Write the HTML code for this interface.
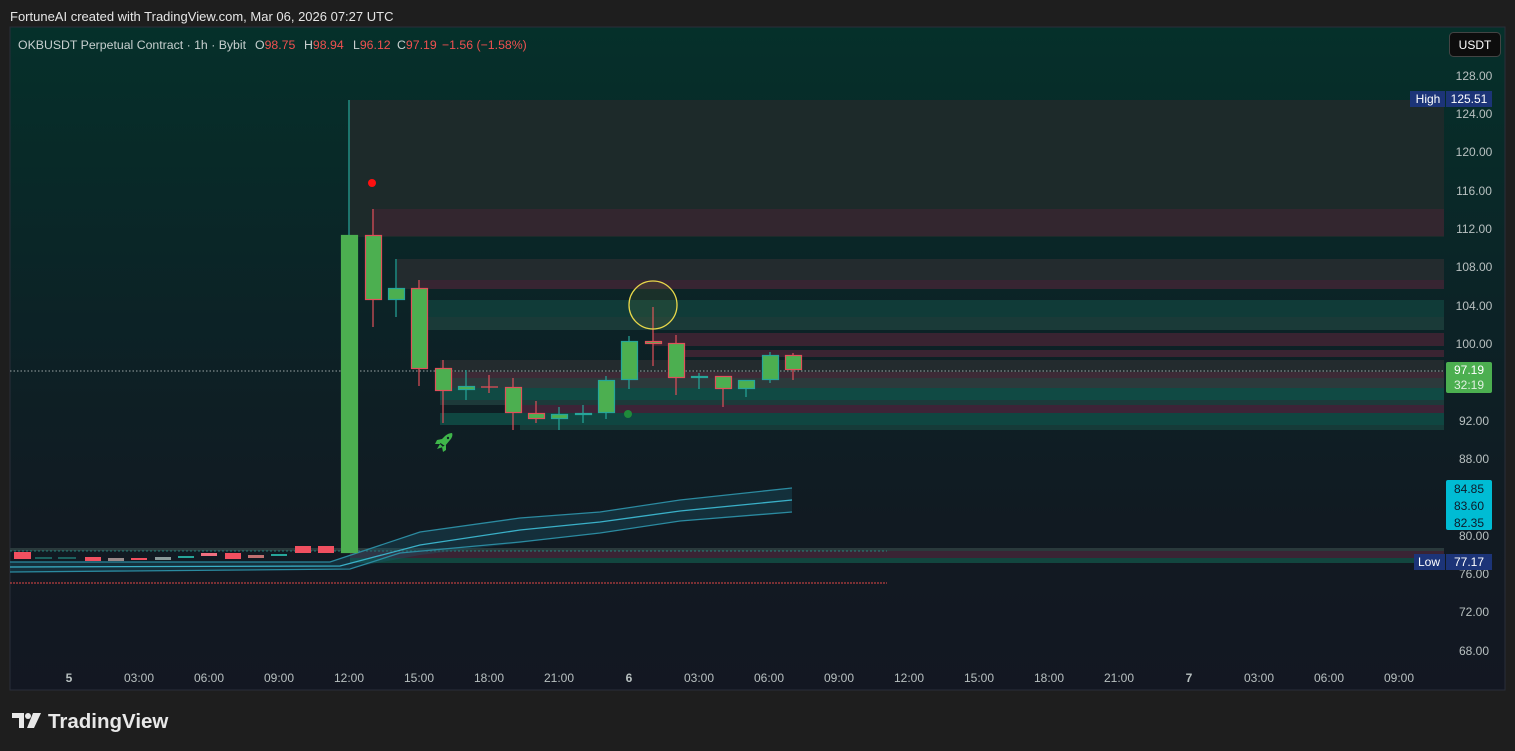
<!DOCTYPE html>
<html><head><meta charset="utf-8"><style>
html,body{margin:0;padding:0;background:#1e1e1e;width:1515px;height:751px;overflow:hidden;font-family:"Liberation Sans",sans-serif}
.top{position:absolute;left:10px;top:9px;color:#e6e6e6;font-size:13px}
svg{position:absolute;left:0;top:0}
</style></head><body>
<div class="top">FortuneAI created with TradingView.com, Mar 06, 2026 07:27 UTC</div>
<svg width="1515" height="751" xmlns="http://www.w3.org/2000/svg" font-family="Liberation Sans, sans-serif">
<defs>
<linearGradient id="bg" x1="0" y1="0" x2="0" y2="1">
<stop offset="0" stop-color="#05302a"/><stop offset="0.45" stop-color="#0c2226"/><stop offset="0.75" stop-color="#111a22"/><stop offset="1" stop-color="#131722"/>
</linearGradient>
</defs>
<rect x="10" y="27" width="1495" height="663" fill="url(#bg)" stroke="#2a2e39"/>
<rect x="349" y="100" width="1095" height="137" fill="#1d2a2a"/>
<rect x="372" y="209" width="1072" height="27" fill="#3a2531" opacity="0.8"/>
<rect x="397" y="259" width="1047" height="30" fill="#232b2e"/>
<rect x="420" y="280" width="1024" height="9" fill="#3b2432" opacity="0.85"/>
<rect x="420" y="300" width="1024" height="30" fill="#134640" opacity="0.7"/>
<rect x="420" y="317" width="1024" height="13" fill="#1a3a38"/>
<rect x="653" y="333" width="791" height="13" fill="#3e2333" opacity="0.9"/>
<rect x="683" y="350" width="761" height="7" fill="#3a2432"/>
<rect x="440" y="360" width="1004" height="13" fill="#232b2e"/>
<rect x="440" y="372" width="1004" height="6" fill="#3d2a36"/>
<rect x="440" y="378" width="1004" height="10" fill="#2c3a3c"/>
<rect x="440" y="388" width="1004" height="12" fill="#10524a" opacity="0.85"/>
<rect x="440" y="400" width="1004" height="5" fill="#1d3a3a"/>
<rect x="510" y="405" width="934" height="8" fill="#43253a" opacity="0.9"/>
<rect x="440" y="413" width="1004" height="12" fill="#0f4d46" opacity="0.85"/>
<rect x="520" y="425" width="924" height="5" fill="#163a38"/>
<rect x="10" y="548" width="1434" height="3" fill="#2a3a3c"/>
<rect x="350" y="551" width="1094" height="7" fill="#3a2434"/>
<rect x="350" y="558" width="1094" height="5" fill="#12463f"/>
<line x1="10" y1="551" x2="887" y2="551" stroke="#26a69a" stroke-dasharray="2 2" stroke-width="1" opacity="0.7"/>
<line x1="10" y1="583" x2="887" y2="583" stroke="#e04646" stroke-dasharray="2 1" stroke-width="1"/>
<path d="M10 562 L330 562 L420 532 L520 518 L600 512 L680 500 L792 488 L792 512 L680 521 L600 533 L520 543 L420 555 L350 568 L10 572 Z" fill="#1b5a6a" opacity="0.35"/>
<path d="M10 562 L330 562 L420 532 L520 518 L600 512 L680 500 L792 488" fill="none" stroke="#2b8aa0" stroke-width="1.3"/>
<path d="M10 567 L340 566 L420 545 L520 530 L600 522 L680 511 L792 500" fill="none" stroke="#3ab0c8" stroke-width="1.3"/>
<path d="M10 572 L350 569 L400 553 L520 542 L600 533 L680 521 L792 512" fill="none" stroke="#2b8aa0" stroke-width="1.3"/>
<line x1="10" y1="371" x2="1444" y2="371" stroke="#9aa5a5" stroke-dasharray="1.5 2" stroke-width="1"/>
<g stroke-width="1">
<rect x="14" y="552" width="17" height="7" fill="#f05060"/>
<line x1="35" y1="558" x2="52" y2="558" stroke="#26a69a"/>
<line x1="58" y1="558" x2="76" y2="558" stroke="#26a69a"/>
<rect x="85" y="557" width="16" height="4" fill="#f05060"/>
<rect x="108" y="558" width="16" height="3" fill="#9a8a8a"/>
<rect x="131" y="558" width="16" height="2" fill="#f05060"/>
<rect x="155" y="557" width="16" height="3" fill="#8a9a9a"/>
<rect x="178" y="556" width="16" height="2" fill="#26a69a"/>
<rect x="201" y="553" width="16" height="3" fill="#f07080"/>
<rect x="225" y="553" width="16" height="6" fill="#f05060"/>
<rect x="248" y="555" width="16" height="3" fill="#c07070"/>
<rect x="271" y="554" width="16" height="2" fill="#26a69a"/>
<rect x="295" y="546" width="16" height="7" fill="#f05060"/>
<rect x="318" y="546" width="16" height="7" fill="#f05060"/>
</g>
<g fill="#4caf50" stroke-width="1.2">
<line x1="349" y1="100" x2="349" y2="235" stroke="#26a69a"/>
<rect x="341.5" y="235.5" width="16" height="317" stroke="#4caf50"/>
<g stroke="#e0505a">
<line x1="373" y1="209" x2="373" y2="327"/><rect x="365.5" y="235.5" width="16" height="64"/>
<line x1="419" y1="280" x2="419" y2="386"/><rect x="411.5" y="288.5" width="16" height="80"/>
<line x1="443" y1="360" x2="443" y2="423"/><rect x="435.5" y="368.5" width="16" height="22"/>
<line x1="489" y1="375" x2="489" y2="393"/><line x1="481" y1="387" x2="498" y2="387"/>
<line x1="513" y1="378" x2="513" y2="430"/><rect x="505.5" y="387.5" width="16" height="25"/>
<line x1="536" y1="401" x2="536" y2="423"/><rect x="528.5" y="413.5" width="16" height="5"/>
<line x1="653" y1="307" x2="653" y2="366"/><rect x="645.5" y="341.5" width="16" height="2"/>
<line x1="676" y1="335" x2="676" y2="395"/><rect x="668.5" y="343.5" width="16" height="34"/>
<line x1="723" y1="376" x2="723" y2="407"/><rect x="715.5" y="376.5" width="16" height="12"/>
<line x1="793" y1="353" x2="793" y2="380"/><rect x="785.5" y="355.5" width="16" height="14"/>
</g>
<g stroke="#26a69a">
<line x1="396" y1="259" x2="396" y2="317"/><rect x="388.5" y="288.5" width="16" height="11"/>
<line x1="466" y1="370" x2="466" y2="400"/><rect x="458.5" y="386.5" width="16" height="3"/>
<line x1="559" y1="407" x2="559" y2="430"/><rect x="551.5" y="414.5" width="16" height="4"/>
<line x1="583" y1="405" x2="583" y2="423"/><rect x="575.5" y="413.5" width="16" height="1"/>
<line x1="606" y1="376" x2="606" y2="419"/><rect x="598.5" y="380.5" width="16" height="32"/>
<line x1="629" y1="336" x2="629" y2="389"/><rect x="621.5" y="341.5" width="16" height="38"/>
<line x1="699" y1="373" x2="699" y2="389"/><rect x="691.5" y="376.5" width="16" height="1"/>
<line x1="746" y1="380" x2="746" y2="397"/><rect x="738.5" y="380.5" width="16" height="8"/>
<line x1="770" y1="352" x2="770" y2="383"/><rect x="762.5" y="355.5" width="16" height="24"/>
</g>
</g>
<circle cx="653" cy="305" r="24" fill="rgba(200,200,80,0.08)" stroke="#e8d84a" stroke-width="1.3"/>
<circle cx="372" cy="183" r="4" fill="#ff1010"/>
<circle cx="628" cy="414" r="4" fill="#1f8a3a"/>
<g fill="#3fb54a">
<path d="M452 433 C453 435 452 438 450 440 L445 446 L439 442 L445 436 C447 434 450 433 452 433 Z"/>
<path d="M442 439 L437 440 L435 444 L440 444 Z"/>
<path d="M446 445 L446 450 L443 452 L442 447 Z"/>
<path d="M440 444 L437 449 L443 447 Z"/>
</g>
<circle cx="448" cy="438" r="1.2" fill="#0c2226"/>
<g font-size="12.3" fill="#c8d0d0">
<text x="18" y="49">OKBUSDT Perpetual Contract · 1h · Bybit</text>
<text x="255" y="49">O<tspan fill="#f05050">98.75</tspan></text>
<text x="304" y="49">H<tspan fill="#f05050">98.94</tspan></text>
<text x="353" y="49">L<tspan fill="#f05050">96.12</tspan></text>
<text x="397" y="49">C<tspan fill="#f05050">97.19</tspan></text>
<text x="442" y="49" fill="#f05050">−1.56 (−1.58%)</text>
</g>
<rect x="1449.5" y="32.5" width="51" height="24" rx="4" fill="#0d0d0d" stroke="#444"/>
<text x="1475" y="49" font-size="12" fill="#fff" text-anchor="middle">USDT</text>
<g font-size="12" fill="#b8c0c0" text-anchor="middle">
<text x="1474" y="80">128.00</text><text x="1474" y="118">124.00</text><text x="1474" y="156">120.00</text><text x="1474" y="195">116.00</text><text x="1474" y="233">112.00</text><text x="1474" y="271">108.00</text><text x="1474" y="310">104.00</text><text x="1474" y="348">100.00</text><text x="1474" y="425">92.00</text><text x="1474" y="463">88.00</text><text x="1474" y="540">80.00</text><text x="1474" y="578">76.00</text><text x="1474" y="616">72.00</text><text x="1474" y="655">68.00</text>
</g>
<rect x="1410" y="91" width="35" height="16" fill="#1c3478"/><text x="1428" y="103" font-size="12" fill="#fff" text-anchor="middle">High</text>
<rect x="1446" y="91" width="46" height="16" fill="#1c3478"/><text x="1469" y="103" font-size="12" fill="#fff" text-anchor="middle">125.51</text>
<rect x="1446" y="362" width="46" height="31" rx="2" fill="#4caf50"/><text x="1469" y="374" font-size="12" fill="#fff" text-anchor="middle">97.19</text><text x="1469" y="389" font-size="12" fill="#e0f0e0" text-anchor="middle">32:19</text>
<rect x="1446" y="480" width="46" height="50" rx="2" fill="#00bcd4"/>
<g font-size="12" fill="#0d1a2a" text-anchor="middle"><text x="1469" y="493">84.85</text><text x="1469" y="510">83.60</text><text x="1469" y="527">82.35</text></g>
<rect x="1414" y="554" width="31" height="16" fill="#1c3478"/><text x="1429" y="566" font-size="12" fill="#fff" text-anchor="middle">Low</text>
<rect x="1446" y="554" width="46" height="16" fill="#1c3478"/><text x="1469" y="566" font-size="12" fill="#fff" text-anchor="middle">77.17</text>
<g font-size="12" fill="#b8c0c0" text-anchor="middle">
<text x="69" y="682" font-weight="bold">5</text><text x="139" y="682">03:00</text><text x="209" y="682">06:00</text><text x="279" y="682">09:00</text><text x="349" y="682">12:00</text><text x="419" y="682">15:00</text><text x="489" y="682">18:00</text><text x="559" y="682">21:00</text><text x="629" y="682" font-weight="bold">6</text><text x="699" y="682">03:00</text><text x="769" y="682">06:00</text><text x="839" y="682">09:00</text><text x="909" y="682">12:00</text><text x="979" y="682">15:00</text><text x="1049" y="682">18:00</text><text x="1119" y="682">21:00</text><text x="1189" y="682" font-weight="bold">7</text><text x="1259" y="682">03:00</text><text x="1329" y="682">06:00</text><text x="1399" y="682">09:00</text>
</g>
<g fill="#e8e8e8">
<path d="M12 713 H24 V728 H19 V718 H12 Z"/>
<circle cx="28" cy="716" r="3"/>
<path d="M33 713 H41 L34 728 H27 Z"/>
</g>
<text x="48" y="728" font-size="20.5" font-weight="bold" fill="#e8e8e8">TradingView</text>
</svg>
</body></html>
